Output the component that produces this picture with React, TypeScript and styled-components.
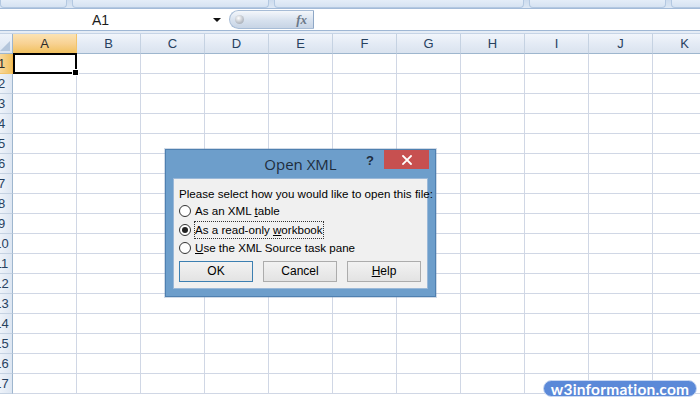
import React from "react"
import styled, { createGlobalStyle } from "styled-components"

const GlobalStyle = createGlobalStyle`
  html, body {
    margin: 0;
    padding: 0;
    background: #ffffff;
    overflow: hidden;
  }
  body {
    font-family: "Liberation Sans", Arial, sans-serif;
  }
`

const COLS = ["A", "B", "C", "D", "E", "F", "G", "H", "I", "J", "K"]
const ROWS = Array.from({ length: 17 }, (_, i) => i + 1)

const Page = styled.div`
  position: relative;
  width: 700px;
  height: 400px;
  overflow: hidden;
  background: #ffffff;
`

const RibbonEdge = styled.div`
  display: flex;
  gap: 5px;
  height: 8px;
  background: linear-gradient(#cddcee, #dce7f4);
  border-bottom: 1px solid #a3bbd8;
`

const RibbonTab = styled.div<{ w: number }>`
  width: ${p => p.w}px;
  flex-shrink: 0;
  height: 7px;
  background: linear-gradient(#e4edf8, #d6e3f2);
  border: 1px solid #b3c8e1;
  border-top: none;
  border-radius: 0 0 4px 4px;
`

const FormulaBar = styled.div`
  display: flex;
  align-items: center;
  height: 21px;
  background: #ffffff;
  border-bottom: 1px solid #9fb7d4;
`

const NameBox = styled.div`
  display: flex;
  align-items: center;
  width: 229px;
  height: 100%;
  padding-left: 92px;
  box-sizing: border-box;
  font-size: 14px;
  color: #1c1c1c;
`

const NameText = styled.span`
  flex: 1;
`

const DropArrow = styled.span`
  width: 0;
  height: 0;
  margin-right: 8px;
  border-left: 4px solid transparent;
  border-right: 4px solid transparent;
  border-top: 4px solid #111;
`

const FxPill = styled.div`
  display: flex;
  align-items: center;
  justify-content: space-between;
  width: 85px;
  height: 19px;
  box-sizing: border-box;
  padding: 0 6px 0 5px;
  background: linear-gradient(#f4f7fb, #d7e1ee 55%, #c7d4e5);
  border: 1px solid #a7bcd6;
  border-right: 1px solid #8ea7c6;
  border-radius: 10px 0 0 10px;
`

const Knob = styled.span`
  width: 9px;
  height: 9px;
  border-radius: 50%;
  background: radial-gradient(circle at 40% 35%, #ffffff, #b9bec6 60%, #9aa3ae);
`

const Fx = styled.span`
  font-family: "Liberation Serif", "Times New Roman", serif;
  font-style: italic;
  font-weight: bold;
  font-size: 13px;
  color: #6b7888;
`

const FormulaInput = styled.div`
  flex: 1;
  height: 100%;
  background: #ffffff;
`

const Spacer = styled.div`
  height: 2px;
  background: #e6edf6;
  border-bottom: 1px solid #c6d4e6;
`

const Grid = styled.div`
  display: flex;
  flex-direction: column;
`

const GridRow = styled.div`
  display: flex;
  height: 20px;
  flex-shrink: 0;
`

const Corner = styled.div`
  position: relative;
  width: 13px;
  flex-shrink: 0;
  box-sizing: border-box;
  background: linear-gradient(#eef3fa, #dbe5f2);
  border-right: 1px solid #9eb6ce;
  border-bottom: 1px solid #9eb6ce;
  overflow: hidden;

  &::after {
    content: "";
    position: absolute;
    right: 2px;
    bottom: 2px;
    width: 0;
    height: 0;
    border-left: 10px solid transparent;
    border-bottom: 10px solid #b4c6dc;
  }
`

const ColHeader = styled.div<{ active?: boolean }>`
  width: 64px;
  flex-shrink: 0;
  box-sizing: border-box;
  display: flex;
  align-items: center;
  justify-content: center;
  font-size: 13px;
  color: ${p => (p.active ? "#2b2b2b" : "#27415f")};
  background: ${p =>
    p.active
      ? "linear-gradient(#fbe3b4, #f8d293 50%, #f1c15f)"
      : "linear-gradient(#f1f5fb, #e4ebf5 50%, #dae3ef)"};
  border-right: 1px solid ${p => (p.active ? "#f2c46c" : "#c5d2e2")};
  border-bottom: 1px solid ${p => (p.active ? "#f2b54a" : "#9eb6ce")};
`

const RowHeader = styled.div<{ active?: boolean }>`
  width: 13px;
  flex-shrink: 0;
  box-sizing: border-box;
  overflow: hidden;
  display: flex;
  align-items: center;
  font-size: 13px;
  color: ${p => (p.active ? "#2b2b2b" : "#27415f")};
  background: ${p =>
    p.active
      ? "linear-gradient(90deg, #f8d89c, #f1c15f)"
      : "linear-gradient(90deg, #edf2f9, #dde6f2)"};
  border-right: 1px solid ${p => (p.active ? "#f2b54a" : "#9eb6ce")};
  border-bottom: 1px solid ${p => (p.active ? "#f2c46c" : "#c5d2e2")};
`

/* the row header is scrolled partly out of view, as in the screenshot */
const RowNumber = styled.span`
  display: block;
  width: 23px;
  margin-left: -10px;
  flex-shrink: 0;
  text-align: center;
`

const Cell = styled.div<{ selected?: boolean }>`
  position: relative;
  width: 64px;
  flex-shrink: 0;
  box-sizing: border-box;
  background: #ffffff;
  border-right: 1px solid #d0d7e5;
  border-bottom: 1px solid #d0d7e5;

  ${p =>
    p.selected &&
    `
    &::before {
      content: "";
      position: absolute;
      left: 0;
      top: -1px;
      right: -1px;
      bottom: -1px;
      border: 2px solid #000;
    }
    &::after {
      content: "";
      position: absolute;
      right: -3px;
      bottom: -3px;
      width: 5px;
      height: 5px;
      background: #000;
      border: 1px solid #fff;
      z-index: 2;
    }
  `}
`

const Dialog = styled.div`
  position: absolute;
  left: 165px;
  top: 149px;
  width: 271px;
  height: 148px;
  box-sizing: border-box;
  display: flex;
  flex-direction: column;
  background: #6d9ecb;
  border: 1px solid #4f80b0;
  box-shadow: 0 0 0 1px rgba(120, 150, 185, 0.35);
  z-index: 5;
`

const TitleBar = styled.div`
  position: relative;
  display: flex;
  align-items: center;
  justify-content: center;
  height: 28px;
  flex-shrink: 0;
`

const Title = styled.span`
  font-family: "Open Sans", "Noto Sans", sans-serif;
  font-size: 15px;
  color: #1e2d3d;
  margin-top: 0;
`

const TitleButtons = styled.div`
  position: absolute;
  right: 6px;
  top: 0;
  display: flex;
  align-items: flex-start;
`

const Help = styled.span`
  font-family: "Liberation Sans", Arial, sans-serif;
  font-weight: bold;
  font-size: 13px;
  color: #1e2d3d;
  margin: 3px 10px 0 0;
`

const Close = styled.div`
  width: 45px;
  height: 19px;
  display: flex;
  align-items: center;
  justify-content: center;
  background: #c75050;
`

const Panel = styled.div`
  flex: 1;
  margin: 0 7px 7px 7px;
  padding: 7px 0 0 5px;
  box-sizing: border-box;
  background: #f0f0f0;
  border: 1px solid #9ab8d8;
  display: flex;
  flex-direction: column;
  font-family: "Liberation Sans", Arial, sans-serif;
  font-size: 11.6px;
  color: #000;
  white-space: nowrap;
`

const Prompt = styled.div`
  height: 16px;
  line-height: 16px;
`

const OptionRow = styled.label`
  display: flex;
  align-items: center;
  height: 18.5px;
  gap: 3px;
`

const Radio = styled.span<{ checked?: boolean }>`
  width: 12px;
  height: 12px;
  box-sizing: border-box;
  border-radius: 50%;
  border: 1px solid #333;
  background: #fff;
  display: flex;
  align-items: center;
  justify-content: center;

  &::after {
    content: "";
    width: 6px;
    height: 6px;
    border-radius: 50%;
    background: ${p => (p.checked ? "#222" : "transparent")};
  }
`

const OptionText = styled.span<{ focused?: boolean }>`
  padding: 1px 0;
  border: 1px dotted ${p => (p.focused ? "#333" : "transparent")};
  line-height: 14px;
`

const Key = styled.span`
  text-decoration: underline;
`

const Buttons = styled.div`
  display: flex;
  gap: 10px;
  margin-top: 3px;
`

const Button = styled.div<{ primary?: boolean }>`
  width: 74px;
  height: 21px;
  box-sizing: border-box;
  display: flex;
  align-items: center;
  justify-content: center;
  background: linear-gradient(#f2f2f2, #e3e3e3);
  border: 1px solid ${p => (p.primary ? "#3c7fb1" : "#acacac")};
  font-size: 12px;
`

const Watermark = styled.div`
  position: absolute;
  left: 543px;
  top: 380px;
  width: 154px;
  height: 17px;
  border-radius: 9px;
  background: #5b89d8;
  border: 1px solid #c9d8f2;
  box-sizing: border-box;
  display: flex;
  align-items: center;
  justify-content: center;
  font-family: "Lato", "Liberation Sans", sans-serif;
  font-weight: bold;
  font-size: 15.5px;
  color: #ffffff;
  letter-spacing: 0.2px;
  z-index: 6;
`

export default function App() {
  return (
    <Page>
      <GlobalStyle />
      <RibbonEdge>
        <RibbonTab w={65} />
        <RibbonTab w={195} />
        <RibbonTab w={248} />
        <RibbonTab w={135} />
        <RibbonTab w={60} />
      </RibbonEdge>
      <FormulaBar>
        <NameBox>
          <NameText>A1</NameText>
          <DropArrow />
        </NameBox>
        <FxPill>
          <Knob />
          <Fx>fx</Fx>
        </FxPill>
        <FormulaInput />
      </FormulaBar>
      <Spacer />
      <Grid>
        <GridRow>
          <Corner />
          {COLS.map(c => (
            <ColHeader key={c} active={c === "A"}>
              {c}
            </ColHeader>
          ))}
        </GridRow>
        {ROWS.map(r => (
          <GridRow key={r}>
            <RowHeader active={r === 1}>
              <RowNumber>{r}</RowNumber>
            </RowHeader>
            {COLS.map(c => (
              <Cell key={c} selected={r === 1 && c === "A"} />
            ))}
          </GridRow>
        ))}
      </Grid>

      <Dialog>
        <TitleBar>
          <Title>Open XML</Title>
          <TitleButtons>
            <Help>?</Help>
            <Close>
              <svg width="10" height="10" viewBox="0 0 10 10">
                <path
                  d="M1 1 L9 9 M9 1 L1 9"
                  stroke="#ffffff"
                  strokeWidth="1.8"
                  strokeLinecap="square"
                />
              </svg>
            </Close>
          </TitleButtons>
        </TitleBar>
        <Panel>
          <Prompt>Please select how you would like to open this file:</Prompt>
          <OptionRow>
            <Radio />
            <OptionText>
              As an XML <Key>t</Key>able
            </OptionText>
          </OptionRow>
          <OptionRow>
            <Radio checked />
            <OptionText focused>
              As a read-only <Key>w</Key>orkbook
            </OptionText>
          </OptionRow>
          <OptionRow>
            <Radio />
            <OptionText>
              <Key>U</Key>se the XML Source task pane
            </OptionText>
          </OptionRow>
          <Buttons>
            <Button primary>OK</Button>
            <Button>Cancel</Button>
            <Button>
              <Key>H</Key>elp
            </Button>
          </Buttons>
        </Panel>
      </Dialog>

      <Watermark>w3information.com</Watermark>
    </Page>
  )
}
